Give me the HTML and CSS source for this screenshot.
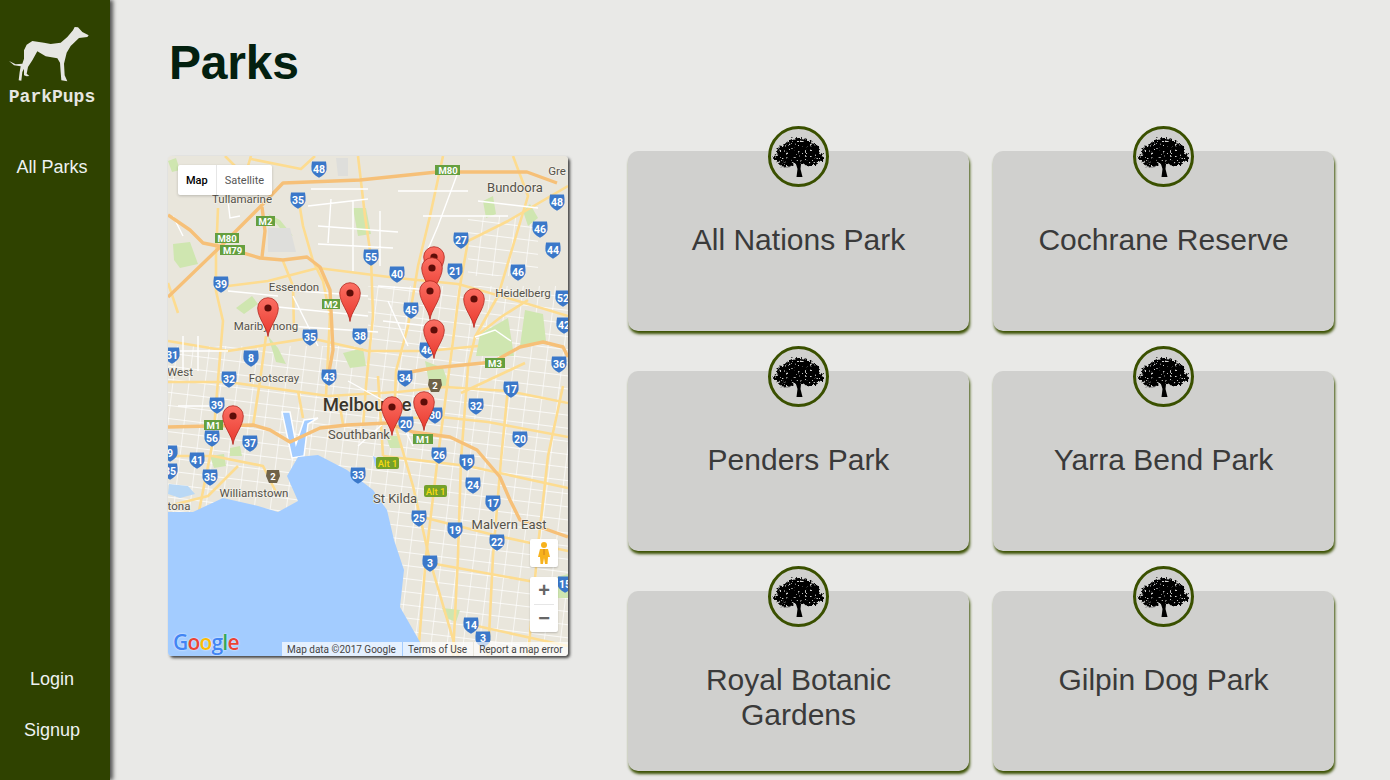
FILE: index.html
```html
<!DOCTYPE html>
<html>
<head>
  <meta charset="utf-8">
  <title>ParkPups</title>
  <meta name="viewport" content="width=device-width, initial-scale=1">
  <link rel="stylesheet" href="styles.css">
</head>
<body>
  <svg class="defs" width="0" height="0">
    <defs>
      <filter id="leafy" x="-10%" y="-10%" width="120%" height="120%">
        <feTurbulence type="fractalNoise" baseFrequency="0.42" numOctaves="2" seed="7" result="noise"/>
        <feDisplacementMap in="SourceGraphic" in2="noise" scale="6" xChannelSelector="R" yChannelSelector="G" result="rough"/>
        <feColorMatrix in="noise" type="matrix" values="0 0 0 0 0  0 0 0 0 0  0 0 0 0 0  0 0 0 -11 8" result="holes"/>
        <feComposite in="rough" in2="holes" operator="in"/>
      </filter>
      <symbol id="tree" viewBox="0 0 52 42">
        <g fill="#000" filter="url(#leafy)">
          <ellipse cx="27" cy="9" rx="13" ry="7"/>
          <ellipse cx="16" cy="15" rx="11" ry="7"/>
          <ellipse cx="37" cy="14" rx="11" ry="7"/>
          <ellipse cx="9" cy="22" rx="8" ry="4"/>
          <ellipse cx="44" cy="21" rx="8" ry="5"/>
          <ellipse cx="26" cy="20" rx="17" ry="8"/>
          <ellipse cx="14" cy="28" rx="8" ry="2.500"/>
          <ellipse cx="38" cy="27" rx="8" ry="2.500"/>
        </g>
        <path d="M24.500 41 L25.500 33 L24 28 L29 28 L28.500 33 L30.500 41 Z" fill="#000"/>
        <path d="M26 30 L20 20 M27 30 L34 21 M26 30 L27 17 M22 24 L14 22 M31 25 L40 23" fill="none" stroke="#000" stroke-width="1.200"/>
        <path d="M8 29 Q13 33 19 30" fill="none" stroke="#444" stroke-width=".6"/>
      </symbol>
      <symbol id="shield" viewBox="0 0 14 15" overflow="visible">
        <path d="M0 -.5 H14 Q14.800 4 14.500 8 Q13.500 12.500 7 15.700 Q.5 12.500 -.5 8 Q-.8 4 0 -.5 Z" fill="#3b78c9"/>
      </symbol>
      <linearGradient id="pinfill" x1="0" y1="0" x2="0" y2="1">
        <stop offset="0" stop-color="#fb6f63"/>
        <stop offset="1" stop-color="#e9392e"/>
      </linearGradient>
      <symbol id="pin" viewBox="0 0 22 40">
        <path d="M11 39.500 C10 30 .7 21 .7 11 A10.300 10.300 0 0 1 21.300 11 C21.300 21 12 30 11 39.500 Z" fill="url(#pinfill)" stroke="#b3281f" stroke-width=".8"/>
        <circle cx="11" cy="11" r="3.600" fill="#5e0d08"/>
      </symbol>
      <pattern id="grid" width="16" height="13" patternUnits="userSpaceOnUse" patternTransform="rotate(7)">
        <path d="M0 0 H16 M0 0 V13" stroke="#fff" stroke-width="1.300" fill="none"/>
      </pattern>
    </defs>
  </svg>

  <nav class="sidebar">
    <div class="brand">
      <svg class="dog" viewBox="0 0 270 186">
        <path d="M254 40 L235 30 L222 16 L212 15 L207 25 L190 45 L170 62 L140 66 L120 62 L85 57 L68 68 L60 85 L60 110 L55 125 L35 127 L15 117 L30 130 L50 133 L47 150 L44 175 L52 176 L55 150 L60 140 L60 160 L68 163 L76 162 L68 155 L72 135 L85 115 L100 88 L125 103 L160 109 L168 122 L170 150 L172 175 L190 178 L182 160 L180 125 L188 92 L200 72 L225 48 L250 45 Z" fill="#e6e6e2"/>
      </svg>
      <div class="brand-name">ParkPups</div>
    </div>
    <a class="nav-link all-parks">All Parks</a>
    <div class="nav-bottom">
      <a class="nav-link">Login</a>
      <a class="nav-link">Signup</a>
    </div>
  </nav>

  <main class="content">
    <h1 class="title">Parks</h1>
    <div class="parks">
      <div class="map">
        <svg class="map-canvas" viewBox="0 0 400 500" width="400" height="500">
          <rect width="400" height="500" fill="#e9e6dc"/>
          <!-- city blocks -->
          <rect x="0" y="190" width="400" height="300" fill="url(#grid)"/>
          <rect x="200" y="130" width="200" height="60" fill="url(#grid)"/>
          <rect x="300" y="60" width="70" height="60" fill="url(#grid)"/>
          <!-- parks -->
          <g fill="#cfe6b0">
            <path d="M5 88 L22 86 L30 108 L12 112 L6 104 Z"/>
            <path d="M185 52 L198 52 L203 78 L190 80 Z"/>
            <path d="M355 55 L362 48 L370 62 L360 70 Z"/>
            <path d="M315 45 L325 40 L328 58 L318 62 Z"/>
            <path d="M357 154 L375 158 L378 185 L352 190 Z"/>
            <path d="M312 178 L340 162 L346 200 L308 200 Z"/>
            <path d="M257 205 L275 212 L282 232 L262 232 Z"/>
            <path d="M175 197 L195 192 L198 210 L182 212 Z"/>
            <path d="M68 152 L84 140 L90 148 L76 158 Z"/>
            <path d="M100 180 L110 192 L118 208 L108 206 Z"/>
            <path d="M62 292 L72 290 L74 300 L62 300 Z"/>
            <path d="M218 280 L230 280 L234 292 L222 292 Z"/>
            <path d="M42 300 L56 298 L58 310 L46 312 Z"/>
            <path d="M274 452 L292 454 L288 466 L278 462 Z"/>
            <path d="M385 422 L400 418 L400 442 L390 442 Z"/>
            <path d="M100 58 L112 64 L125 80 L112 72 Z"/>
            <path d="M0 5 L8 2 L12 14 L4 16 Z"/>
          </g>
          <path d="M100 72 H122 L128 96 H100 Z" fill="#dededb"/>
          <path d="M168 2 H180 V20 H170 Z" fill="#dededb"/>
          <!-- docks -->
          <path d="M114 256 L122 256 L128 288 L136 264 L150 262 L140 268 L136 300 L124 302 Z" fill="#a3ccff" stroke="#fff" stroke-width="1.500"/>
          <!-- arterials -->
          <g fill="none" stroke="#fddc90" stroke-width="2.600" stroke-linejoin="round">
            <path d="M190 0 L197 60 L203 101 L205 160 L198 230 L195 270"/>
            <path d="M275 0 L262 60 L250 110 L240 170 L228 215 L226 265 L245 330 L262 405 L290 500"/>
            <path d="M300 85 L292 130 L283 200 L270 300 L258 400 L250 500"/>
            <path d="M130 40 L135 70 L145 105 L155 125 L162 160 L158 240"/>
            <path d="M50 52 L48 100 L48 135 L55 165 L52 200 L45 285 L30 360"/>
            <path d="M0 185 L60 195 L142 182 L200 195 L260 195 L310 190"/>
            <path d="M150 112 L229 122 L290 128 L350 145 L400 160"/>
            <path d="M0 226 L60 226 L160 240 L230 236 L277 231 L340 235 L400 247"/>
            <path d="M240 262 L273 261 L320 266 L400 281"/>
            <path d="M215 300 L300 310 L400 332"/>
            <path d="M250 360 L330 380 L400 395"/>
            <path d="M262 407 L400 432"/>
            <path d="M300 468 L400 490"/>
            <path d="M345 0 L360 40 L345 90 L330 140 L307 181 L300 211 L293 304 L290 400 L285 500"/>
            <path d="M340 231 L333 304 L325 400 L320 500"/>
            <path d="M293 237 L357 207"/>
            <path d="M307 181 L333 161 L360 144"/>
            <path d="M300 85 L340 65 L400 30"/>
            <path d="M60 130 L100 125 L150 112"/>
            <path d="M115 105 L125 130 L126 175"/>
            <path d="M98 180 L92 225 L85 270"/>
            <path d="M0 300 L45 300 L95 310 L110 340"/>
            <path d="M395 230 L380 300 L370 390 L360 500"/>
            <path d="M83 3 L133 13 L147 0"/>
            <path d="M57 0 L77 20 L83 0"/>
            <path d="M0 350 L40 340 L70 310"/>
            <path d="M0 127 L10 157"/>
            <path d="M210 220 L215 300 M170 240 L175 268 M130 235 L135 262"/>
          </g>
          <!-- white streets -->
          <g fill="none" stroke="#fff" stroke-width="1.400">
            <path d="M143 33 H200 M140 50 L200 43 M150 70 L230 76 M150 88 L225 92 M163 43 L160 87 M185 45 V115 M212 55 V110"/>
            <path d="M230 35 H300 M255 60 H340 M310 45 L370 52"/>
            <path d="M290 16 L270 70 L255 105"/>
            <path d="M60 45 L62 62 L72 60 M5 60 L15 80"/>
            <path d="M120 170 L210 176 M100 150 L200 160 M130 135 L200 140 M60 135 L110 140 M125 140 L150 190"/>
            <path d="M210 130 L265 134 M215 165 L260 170 M220 145 L240 190"/>
            <path d="M10 250 H50 M15 180 V215 M30 180 V215 M5 195 H60"/>
            <path d="M180 225 L225 250 L245 290 M190 290 L235 250"/>
            <path d="M307 181 L327 174 L343 185"/>
          </g>
          <!-- freeways -->
          <g fill="none" stroke="#f6c078" stroke-width="3.400" stroke-linejoin="round">
            <path d="M0 59 L22 74 L35 87 L55 91 L92 102 L115 104 L139 101 L152 111 L162 134 L165 194 L160 221"/>
            <path d="M0 141 L52 91 L92 51 L115 27 L192 24 L269 16 L359 16 L389 27"/>
            <path d="M94 51 L97 75 L94 101"/>
            <path d="M0 271 L85 269 L102 274 L122 286 L152 272 L179 269 L219 267 L245 276 L282 281 L309 294 L332 321 L342 344 L352 364 L400 381"/>
            <path d="M242 216 L265 212 L325 206 L352 191 L375 186 L395 191 L400 201"/>
          </g>
          <!-- water -->
          <path d="M0 356 L25 356 L55 342 L90 350 L110 356 L130 345 L119 320 L130 301 L150 299 L179 314 L205 334 L219 354 L226 384 L236 414 L232 451 L252 486 L254 500 L0 500 Z" fill="#a3ccff"/>
          <path d="M205 300 L216 306 L218 312 L207 310 Z" fill="#a3ccff"/>
          <path d="M1 328 L20 330 L27 338 L12 342 L0 338 Z" fill="#b9d8f5"/>

          <!-- road shields -->
          <g>
            <use href="#shield" x="144" y="6" width="14" height="15"/><use href="#shield" x="123" y="37" width="14" height="15"/>
            <use href="#shield" x="196" y="94" width="14" height="15"/><use href="#shield" x="222" y="111" width="14" height="15"/>
            <use href="#shield" x="286" y="77" width="14" height="15"/><use href="#shield" x="280" y="108" width="14" height="15"/>
            <use href="#shield" x="365" y="66" width="14" height="15"/><use href="#shield" x="382" y="39" width="14" height="15"/>
            <use href="#shield" x="378" y="87" width="14" height="15"/><use href="#shield" x="343" y="109" width="14" height="15"/>
            <use href="#shield" x="388" y="135" width="14" height="15"/><use href="#shield" x="389" y="162" width="14" height="15"/>
            <use href="#shield" x="384" y="201" width="14" height="15"/><use href="#shield" x="46" y="121" width="14" height="15"/>
            <use href="#shield" x="135" y="174" width="14" height="15"/><use href="#shield" x="185" y="173" width="14" height="15"/>
            <use href="#shield" x="236" y="147" width="14" height="15"/><use href="#shield" x="252" y="187" width="14" height="15"/>
            <use href="#shield" x="-3" y="192" width="14" height="15"/><use href="#shield" x="76" y="195" width="14" height="15"/>
            <use href="#shield" x="54" y="216" width="14" height="15"/><use href="#shield" x="154" y="214" width="14" height="15"/>
            <use href="#shield" x="230" y="215" width="14" height="15"/><use href="#shield" x="336" y="226" width="14" height="15"/>
            <use href="#shield" x="42" y="242" width="14" height="15"/><use href="#shield" x="301" y="243" width="14" height="15"/>
            <use href="#shield" x="37" y="275" width="14" height="15"/><use href="#shield" x="75" y="280" width="14" height="15"/>
            <use href="#shield" x="-5" y="290" width="14" height="15"/><use href="#shield" x="22" y="297" width="14" height="15"/>
            <use href="#shield" x="-5" y="308" width="14" height="15"/><use href="#shield" x="35" y="314" width="14" height="15"/>
            <use href="#shield" x="183" y="312" width="14" height="15"/><use href="#shield" x="231" y="261" width="14" height="15"/>
            <use href="#shield" x="260" y="252" width="14" height="15"/><use href="#shield" x="345" y="276" width="14" height="15"/>
            <use href="#shield" x="264" y="292" width="14" height="15"/><use href="#shield" x="292" y="299" width="14" height="15"/>
            <use href="#shield" x="298" y="322" width="14" height="15"/><use href="#shield" x="318" y="340" width="14" height="15"/>
            <use href="#shield" x="244" y="355" width="14" height="15"/><use href="#shield" x="280" y="367" width="14" height="15"/>
            <use href="#shield" x="322" y="379" width="14" height="15"/><use href="#shield" x="255" y="400" width="14" height="15"/>
            <use href="#shield" x="296" y="462" width="14" height="15"/><use href="#shield" x="308" y="476" width="14" height="15"/>
            <use href="#shield" x="390" y="421" width="14" height="15"/>
          </g>
          <g class="shield-num">
            <text x="151" y="17">48</text><text x="130" y="48">35</text><text x="203" y="105">55</text><text x="229" y="122">40</text>
            <text x="293" y="88">27</text><text x="287" y="119">21</text><text x="372" y="77">46</text><text x="389" y="50">48</text>
            <text x="385" y="98">44</text><text x="350" y="120">46</text><text x="395" y="146">52</text><text x="396" y="173">42</text>
            <text x="391" y="212">36</text><text x="53" y="132">39</text><text x="142" y="185">35</text><text x="192" y="184">38</text>
            <text x="243" y="158">45</text><text x="259" y="198">46</text><text x="4" y="203">31</text><text x="83" y="206">8</text>
            <text x="61" y="227">32</text><text x="161" y="225">43</text><text x="237" y="226">34</text><text x="343" y="237">17</text>
            <text x="49" y="253">39</text><text x="308" y="254">32</text><text x="44" y="286">56</text><text x="82" y="291">37</text>
            <text x="2" y="301">9</text><text x="29" y="308">41</text><text x="2" y="319">35</text><text x="42" y="325">35</text>
            <text x="190" y="323">33</text><text x="238" y="272">20</text><text x="267" y="263">30</text><text x="352" y="287">20</text>
            <text x="271" y="303">26</text><text x="299" y="310">19</text><text x="305" y="333">24</text><text x="325" y="351">17</text>
            <text x="251" y="366">25</text><text x="287" y="378">19</text><text x="329" y="390">22</text><text x="262" y="411">3</text>
            <text x="303" y="473">14</text><text x="315" y="486">3</text><text x="397" y="432">15</text>
          </g>

          <!-- motorway signs -->
          <g fill="#659f3f">
            <rect x="267" y="9" width="25" height="10"/><rect x="88" y="60" width="19" height="10"/>
            <rect x="47" y="77" width="24" height="10"/><rect x="52" y="89" width="25" height="10"/>
            <rect x="154" y="143" width="18" height="10"/><rect x="317" y="202" width="20" height="10"/>
            <rect x="36" y="264" width="19" height="10"/><rect x="245" y="278" width="20" height="10"/>
          </g>
          <g class="sign-text">
            <text x="280" y="17.500">M80</text><text x="97.500" y="68.500">M2</text><text x="59" y="85.500">M80</text><text x="64.500" y="97.500">M79</text>
            <text x="163" y="151.500">M2</text><text x="327" y="210.500">M3</text><text x="45.500" y="272.500">M1</text><text x="255" y="286.500">M1</text>
          </g>
          <g fill="#74a12b">
            <rect x="208" y="301" width="23" height="12" rx="2"/><rect x="256" y="329" width="23" height="12" rx="2"/>
          </g>
          <g class="alt-text">
            <text x="219.500" y="310.500">Alt 1</text><text x="267.500" y="338.500">Alt 1</text>
          </g>
          <g fill="#6f6248">
            <path d="M261 223 H273 L274 229 L271 236 H263 L260 229 Z"/>
            <path d="M99 314 H111 L112 320 L109 327 H101 L98 320 Z"/>
          </g>
          <g class="sign-text">
            <text x="267" y="233">2</text><text x="105" y="324">2</text>
          </g>

          <!-- place names -->
          <g class="place">
            <text x="389" y="19">Gre</text><text class="place-lg" x="347" y="36">Bundoora</text><text x="74" y="47">Tullamarine</text>
            <text x="126" y="135">Essendon</text><text x="355" y="141">Heidelberg</text><text x="98" y="174">Maribyrnong</text>
            <text x="12" y="220">West</text><text x="106" y="226">Footscray</text><text class="place-lg" x="191" y="283">Southbank</text>
            <text x="86" y="341">Williamstown</text><text x="11" y="354">tona</text><text class="place-lg" x="227" y="347">St Kilda</text>
            <text class="place-lg" x="341" y="373">Malvern East</text>
            <text class="place-big" x="199" y="255">Melbourne</text>
          </g>

          <!-- markers -->
          <use href="#pin" x="255" y="90" width="22" height="40"/>
          <use href="#pin" x="253" y="101" width="22" height="40"/>
          <use href="#pin" x="251" y="124" width="22" height="40"/>
          <use href="#pin" x="295" y="132" width="22" height="40"/>
          <use href="#pin" x="171" y="126" width="22" height="40"/>
          <use href="#pin" x="89" y="141" width="22" height="40"/>
          <use href="#pin" x="255" y="163" width="22" height="40"/>
          <use href="#pin" x="213" y="240" width="22" height="40"/>
          <use href="#pin" x="245" y="235" width="22" height="40"/>
          <use href="#pin" x="54" y="249" width="22" height="40"/>
        </svg>

        <div class="map-type">
          <span class="map-type-btn map-type-on">Map</span>
          <span class="map-type-btn">Satellite</span>
        </div>
        <div class="map-tools">
          <div class="pegman">
            <svg width="14" height="24" viewBox="0 0 14 24">
              <circle cx="7" cy="4" r="3" fill="#f7b21c"/>
              <path d="M3 8 H11 L13 16 H11 L10.500 23 H8 L7 17 L6 23 H3.500 L3 16 H1 Z" fill="#f7b21c"/>
              <path d="M7 8 V14" stroke="#d0801c" stroke-width="1"/>
            </svg>
          </div>
          <div class="zoom-box">
            <div class="zoom-btn">+</div>
            <div class="zoom-rule"></div>
            <div class="zoom-btn">−</div>
          </div>
        </div>
        <div class="google"><span class="g-b">G</span><span class="g-r">o</span><span class="g-y">o</span><span class="g-b">g</span><span class="g-g">l</span><span class="g-r">e</span></div>
        <div class="map-terms">
          <span class="terms-item">Map data ©2017 Google</span>
          <span class="terms-item">Terms of Use</span>
          <span class="terms-item">Report a map error</span>
        </div>
      </div>

      <div class="cards">
        <div class="card">
          <div class="card-badge"><svg class="tree"><use href="#tree"/></svg></div>
          <h2 class="card-title">All Nations Park</h2>
        </div>
        <div class="card">
          <div class="card-badge"><svg class="tree"><use href="#tree"/></svg></div>
          <h2 class="card-title">Cochrane Reserve</h2>
        </div>
        <div class="card">
          <div class="card-badge"><svg class="tree"><use href="#tree"/></svg></div>
          <h2 class="card-title">Penders Park</h2>
        </div>
        <div class="card">
          <div class="card-badge"><svg class="tree"><use href="#tree"/></svg></div>
          <h2 class="card-title">Yarra Bend Park</h2>
        </div>
        <div class="card">
          <div class="card-badge"><svg class="tree"><use href="#tree"/></svg></div>
          <h2 class="card-title">Royal Botanic Gardens</h2>
        </div>
        <div class="card">
          <div class="card-badge"><svg class="tree"><use href="#tree"/></svg></div>
          <h2 class="card-title">Gilpin Dog Park</h2>
        </div>
      </div>
    </div>
  </main>
</body>
</html>
```

FILE: styles.css
```css
html, body {
  height: 780px;
  overflow: hidden;
}

body {
  margin: 0;
  display: flex;
  background-color: #e9e9e7;
  font-family: "Liberation Sans", Arial, sans-serif;
}

.defs {
  position: absolute;
}

/* sidebar */

.sidebar {
  box-sizing: border-box;
  width: 110px;
  height: 780px;
  flex: none;
  padding-right: 6px;
  display: flex;
  flex-direction: column;
  align-items: center;
  background-color: #2f4200;
  box-shadow: 3px 0 4px #555;
}

.brand {
  display: flex;
  flex-direction: column;
  align-items: center;
  padding-top: 22px;
}

.dog {
  width: 90px;
  height: 62px;
  margin-right: 6px;
}

.brand-name {
  margin-top: 3px;
  color: #e6e6e2;
  font-family: "Liberation Mono", "Courier New", monospace;
  font-weight: bold;
  font-size: 18px;
  line-height: 20px;
}

.nav-link {
  display: block;
  color: #eef2f2;
  font-size: 18px;
  line-height: 21px;
  text-align: center;
}

.all-parks {
  margin-top: 50px;
}

.nav-bottom {
  margin-top: auto;
  padding-bottom: 39px;
  display: flex;
  flex-direction: column;
  gap: 30px;
}

/* main */

.content {
  flex: 1;
  padding-left: 58px;
}

.title {
  margin: 0 0 0 1px;
  padding-top: 35px;
  color: #03200f;
  font-size: 48px;
  line-height: 55px;
  font-weight: bold;
  letter-spacing: -0.2px;
}

.parks {
  display: flex;
  align-items: flex-start;
  margin-top: 36px;
}

/* map */

.map {
  position: relative;
  width: 400px;
  height: 500px;
  flex: none;
  margin-top: 30px;
  border-radius: 4px;
  overflow: hidden;
  box-shadow: 2px 2px 3px #444;
  font-family: Roboto, "Liberation Sans", sans-serif;
}

.map-canvas {
  display: block;
}

.shield-num text {
  fill: #fff;
  font-family: Roboto, sans-serif;
  font-size: 10.500px;
  font-weight: 700;
  text-anchor: middle;
}

.sign-text text {
  fill: #fff;
  font-family: Roboto, sans-serif;
  font-size: 9.500px;
  font-weight: 700;
  text-anchor: middle;
}

.alt-text text {
  fill: #f6d90f;
  font-family: Roboto, sans-serif;
  font-size: 9.500px;
  font-weight: 500;
  text-anchor: middle;
}

.place text {
  fill: #55524a;
  font-family: Roboto, sans-serif;
  font-size: 11.500px;
  text-anchor: middle;
  paint-order: stroke;
  stroke: #f3f0e8;
  stroke-width: 1.500px;
}

.place .place-lg {
  font-size: 13px;
}

.place .place-big {
  fill: #3a362c;
  font-size: 18.500px;
  font-weight: 500;
}

.map-type {
  position: absolute;
  top: 9px;
  left: 10px;
  display: flex;
  height: 30px;
  background-color: #fff;
  border-radius: 2px;
  box-shadow: 0 1px 3px rgba(0, 0, 0, 0.2);
  font-size: 11px;
  line-height: 31px;
  color: #565656;
}

.map-type-btn {
  padding: 0 8px;
}

.map-type-on {
  color: #000;
  font-weight: 500;
  border-right: 1px solid #e6e6e6;
}

.map-tools {
  position: absolute;
  top: 383px;
  right: 10px;
  display: flex;
  flex-direction: column;
  gap: 10px;
  width: 28px;
}

.pegman {
  height: 28px;
  display: flex;
  align-items: center;
  justify-content: center;
  background-color: #fff;
  border-radius: 2px;
  box-shadow: 0 1px 2px rgba(0, 0, 0, 0.2);
}

.zoom-box {
  height: 55px;
  background-color: #fff;
  border-radius: 2px;
  box-shadow: 0 1px 2px rgba(0, 0, 0, 0.2);
}

.zoom-btn {
  height: 27px;
  color: #666;
  font-family: "Liberation Sans", sans-serif;
  font-weight: bold;
  font-size: 20px;
  line-height: 27px;
  text-align: center;
}

.zoom-rule {
  height: 1px;
  margin: 0 4px;
  background-color: #e6e6e6;
}

.google {
  position: absolute;
  left: 5px;
  bottom: 1px;
  font-family: "Open Sans", sans-serif;
  font-weight: 600;
  font-size: 21px;
  line-height: 26px;
  letter-spacing: -0.8px;
  text-shadow: 0 0 2px #fff;
}

.g-b { color: #4285f4; }
.g-r { color: #ea4335; }
.g-y { color: #fbbc05; }
.g-g { color: #34a853; }

.map-terms {
  position: absolute;
  right: 0;
  bottom: 0;
  width: 286px;
  height: 14px;
  display: flex;
  font-size: 10px;
  line-height: 15px;
  color: #444;
}

.terms-item {
  padding: 0 6px 0 5px;
  margin-right: 1px;
  background-color: rgba(255, 255, 255, 0.7);
  white-space: nowrap;
}

/* cards */

.cards {
  display: grid;
  grid-template-columns: 341px 341px;
  grid-auto-rows: 180px;
  column-gap: 24px;
  row-gap: 40px;
  margin-left: 60px;
  padding-top: 25px;
}

.card {
  position: relative;
  box-sizing: border-box;
  padding: 71px 40px 0;
  background-color: #d0d0ce;
  border-radius: 10px;
  box-shadow: 1px 3px 3px #3a5000;
}

.card-title {
  margin: 0;
  color: #3a3a3a;
  font-size: 30px;
  line-height: 35px;
  font-weight: normal;
  text-align: center;
}

.card-badge {
  position: absolute;
  top: -25px;
  left: 50%;
  box-sizing: border-box;
  width: 61px;
  height: 61px;
  margin-left: -31px;
  display: flex;
  align-items: center;
  justify-content: center;
  background-color: #d0d0ce;
  border: 3px solid #3a5000;
  border-radius: 50%;
}

.tree {
  width: 52px;
  height: 42px;
}
```
